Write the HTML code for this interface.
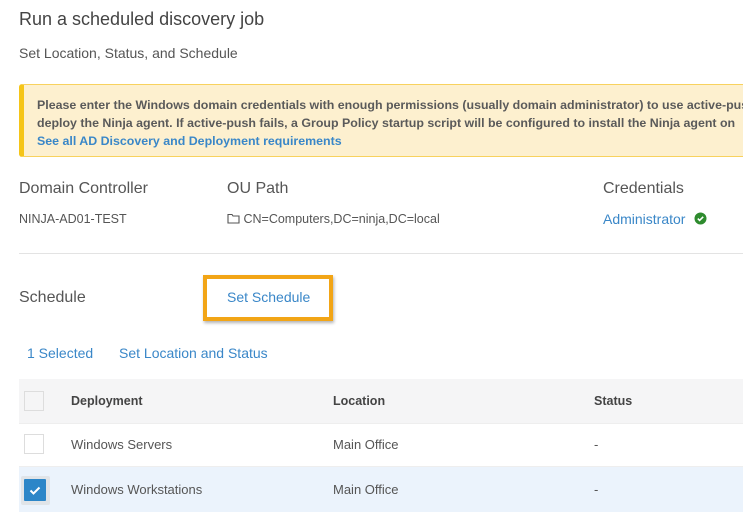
<!DOCTYPE html>
<html><head><style>
body{margin:0;width:743px;height:520px;overflow:hidden;background:#fff;font-family:"Liberation Sans",sans-serif;position:relative;color:#555}
.a{position:absolute;white-space:nowrap}
.lnk{color:#3a87c8}
.cb{position:absolute;left:24px;width:20px;height:20px;border:1px solid #ddd;background:#fff;box-sizing:border-box}
</style></head><body>
<div class="a" style="left:19px;top:9px;font-size:18px;color:#444">Run a scheduled discovery job</div>
<div class="a" style="left:19px;top:45px;font-size:14px;color:#555">Set Location, Status, and Schedule</div>
<div class="a" style="left:19px;top:84px;width:740px;height:73px;background:#fdf0cf;border:1px solid #f8d25e;border-left:5px solid #f5c518;border-radius:3px;box-sizing:border-box"></div>
<div class="a" style="left:37px;top:96px;font-size:12.4px;font-weight:bold;color:#5a5a5a;line-height:18px">Please enter the Windows domain credentials with enough permissions (usually domain administrator) to use active-push to<br>deploy the Ninja agent. If active-push fails, a Group Policy startup script will be configured to install the Ninja agent on<br><span class="lnk">See all AD Discovery and Deployment requirements</span></div>
<div class="a" style="left:19px;top:180px;font-size:16px;color:#555">Domain Controller</div>
<div class="a" style="left:227px;top:180px;font-size:16px;color:#555">OU Path</div>
<div class="a" style="left:603px;top:180px;font-size:16px;color:#555">Credentials</div>
<div class="a" style="left:19px;top:212px;font-size:12.5px">NINJA-AD01-TEST</div>
<div class="a" style="left:227px;top:212px;font-size:12.5px"><svg width="13" height="11" viewBox="0 0 13 11" style="vertical-align:-1px"><path d="M1 1.5h4l1 1.5h6v7H1z" fill="none" stroke="#555" stroke-width="1.1"/></svg> CN=Computers,DC=ninja,DC=local</div>
<div class="a lnk" style="left:603px;top:211px;font-size:14px">Administrator <svg width="13" height="13" viewBox="0 0 13 13" style="vertical-align:-1px;margin-left:5px"><circle cx="6.5" cy="6.5" r="6" fill="#2e8b2e"/><path d="M3.8 6.6l1.8 1.8 3.6-3.6" fill="none" stroke="#fff" stroke-width="1.6"/></svg></div>
<div class="a" style="left:19px;top:253px;width:724px;height:1px;background:#e3e3e3"></div>
<div class="a" style="left:19px;top:289px;font-size:16px;color:#555">Schedule</div>
<div class="a" style="left:203px;top:275px;width:130px;height:46px;border:4px solid #f2a516;box-sizing:border-box;box-shadow:1px 2px 3px rgba(0,0,0,.3)"></div>
<div class="a lnk" style="left:227px;top:289px;font-size:14px">Set Schedule</div>
<div class="a lnk" style="left:27px;top:345px;font-size:14px">1 Selected</div>
<div class="a lnk" style="left:119px;top:345px;font-size:14px">Set Location and Status</div>
<div class="a" style="left:19px;top:379px;width:724px;height:44px;background:#f5f5f6"></div>
<div class="a" style="left:19px;top:467px;width:724px;height:45px;background:#ebf3fc"></div>
<div class="a" style="left:19px;top:423px;width:724px;height:1px;background:#eee"></div>
<div class="a" style="left:19px;top:466px;width:724px;height:1px;background:#eee"></div>
<div class="cb" style="top:391px;background:#f5f5f6"></div>
<div class="cb" style="top:434px"></div>
<div class="a" style="left:21px;top:476px;width:29px;height:29px;background:#e0e4e8;border-radius:2px"></div>
<div class="a" style="left:24px;top:479px;width:22px;height:22px;background:#2c86c8;border-radius:1px"><svg width="22" height="22"><path d="M6.5 11.5l3 3 6-6" fill="none" stroke="#fff" stroke-width="2"/></svg></div>
<div class="a" style="left:71px;top:394px;font-size:12.5px;font-weight:bold;color:#444">Deployment</div>
<div class="a" style="left:333px;top:394px;font-size:12.5px;font-weight:bold;color:#444">Location</div>
<div class="a" style="left:594px;top:394px;font-size:12.5px;font-weight:bold;color:#444">Status</div>
<div class="a" style="left:71px;top:437px;font-size:13px">Windows Servers</div>
<div class="a" style="left:333px;top:437px;font-size:13px">Main Office</div>
<div class="a" style="left:594px;top:437px;font-size:13px">-</div>
<div class="a" style="left:71px;top:482px;font-size:13px">Windows Workstations</div>
<div class="a" style="left:333px;top:482px;font-size:13px">Main Office</div>
<div class="a" style="left:594px;top:482px;font-size:13px">-</div>
</body></html>
